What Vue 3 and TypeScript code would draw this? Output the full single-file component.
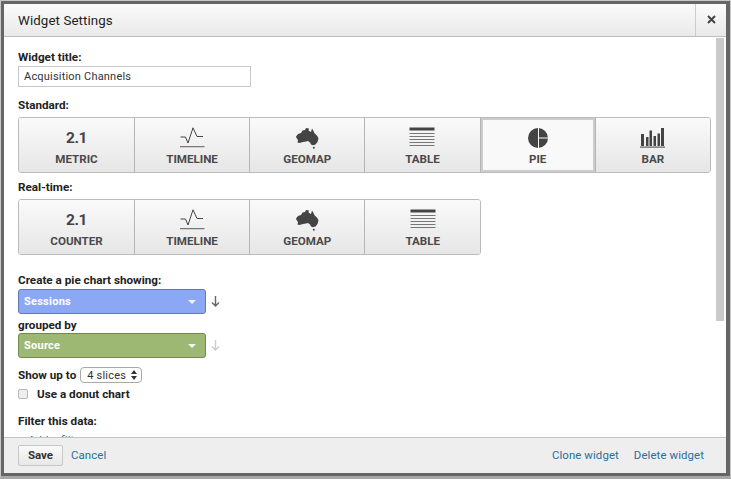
<script setup lang="ts">
interface Chart { label: string; icon: string; active?: boolean }
const standard: Chart[] = [
  { label: 'METRIC', icon: 'num' },
  { label: 'TIMELINE', icon: 'line' },
  { label: 'GEOMAP', icon: 'map' },
  { label: 'TABLE', icon: 'table' },
  { label: 'PIE', icon: 'pie', active: true },
  { label: 'BAR', icon: 'bar' },
]
const realtime: Chart[] = [
  { label: 'COUNTER', icon: 'num' },
  { label: 'TIMELINE', icon: 'line' },
  { label: 'GEOMAP', icon: 'map' },
  { label: 'TABLE', icon: 'table' },
]
const groups = [
  { title: 'Standard:', items: standard, cls: 'standard' },
  { title: 'Real-time:', items: realtime, cls: 'realtime' },
]
</script>

<template>
  <div class="frame">
    <div class="dialog">
      <header class="head">
        <h1 class="title">Widget Settings</h1>
        <button class="close" aria-label="Close">
          <svg width="9" height="9" viewBox="0 0 9 9"><path d="M1 1l7 7M8 1L1 8" stroke="#444" stroke-width="2" /></svg>
        </button>
      </header>
      <div class="main">
        <div class="content">
          <label class="lbl first">Widget title:</label>
          <input class="text" value="Acquisition Channels" />
          <template v-for="g in groups" :key="g.title">
            <div class="lbl" :class="'lbl-' + g.cls">{{ g.title }}</div>
            <div class="charts" :class="g.cls">
              <button v-for="c in g.items" :key="c.label" class="chart" :class="{ active: c.active }">
                <span class="ico">
                  <span v-if="c.icon === 'num'" class="num">2.1</span>
                  <svg v-else-if="c.icon === 'line'" width="26" height="21" viewBox="0 0 26 21">
                    <path d="M1.500 10H6.500L9 16 14 .8 18 9.500H24" fill="none" stroke="#444" stroke-width="1" />
                    <path d="M1 19.700H25.500" stroke="#777" stroke-width="1.200" />
                  </svg>
                  <svg v-else-if="c.icon === 'map'" width="24" height="22" viewBox="0 0 24 22">
                    <path d="M1 9.500 3 7l3-1 1.500-2.500L10 3l1-2 3 .5-.5 2 2.500 1.500L17 1.500l1.500 2.500.8 2 3 3 1.200 2.500-1 3.500-2 2.500-2.500.8-2-.8-1-2-2-1.500-2 .5-3 .5-3.500 1-2-.5.5-2.500L1.500 11z" fill="#444" />
                    <circle cx="18.800" cy="20.800" r="1" fill="#444" />
                  </svg>
                  <svg v-else-if="c.icon === 'table'" width="26" height="21" viewBox="0 0 26 21">
                    <rect x="0.500" y="0.500" width="25" height="3" fill="#444" />
                    <path d="M.5 6.500h25M.5 9.500h25M.5 12.500h25M.5 15.500h25M.5 18.500h25" stroke="#777" stroke-width="1.200" />
                  </svg>
                  <svg v-else-if="c.icon === 'pie'" width="20" height="20" viewBox="0 0 20 20">
                    <circle cx="10" cy="10" r="10" fill="#444" />
                    <path d="M10.500 0v20M10.500 10H20" stroke="#fafafa" stroke-width="1" />
                  </svg>
                  <svg v-else width="25" height="21" viewBox="0 0 25 21">
                    <path d="M1 7h3v12H1zM6 10h2.500v9H6zM9.500 3.500H12V19H9.500zM13.500 9H16v10h-2.500zM17.500 6.500H20V19h-2.500zM21 1h3v18h-3z" fill="#444" />
                    <path d="M0 20.200H25" stroke="#666" stroke-width="1.200" />
                  </svg>
                </span>
                <span class="name">{{ c.label }}</span>
              </button>
            </div>
          </template>

          <div class="lbl showing">Create a pie chart showing:</div>
          <div class="pick">
            <div class="dd blue"><span>Sessions</span><i class="caret"></i></div>
            <svg class="arrow" width="9" height="11" viewBox="0 0 9 11"><path d="M4.500 0v10M1 6.500l3.500 3.500L8 6.500" fill="none" stroke="#666" stroke-width="1.400" /></svg>
          </div>
          <div class="lbl grouped">grouped by</div>
          <div class="pick second">
            <div class="dd green"><span>Source</span><i class="caret"></i></div>
            <svg class="arrow" width="9" height="11" viewBox="0 0 9 11"><path d="M4.500 0v10M1 6.500l3.500 3.500L8 6.500" fill="none" stroke="#ccc" stroke-width="1.400" /></svg>
          </div>
          <div class="show">
            <span class="lbl-inline">Show up to</span>
            <div class="slices">
              <span>4 slices</span>
              <svg width="6" height="10" viewBox="0 0 6 10"><path d="M3 0l3 4H0zM3 10L0 6h6z" fill="#333" /></svg>
            </div>
          </div>
          <div class="donut">
            <span class="check"></span>
            <span class="lbl-inline">Use a donut chart</span>
          </div>
          <div class="lbl filter">Filter this data:</div>
          <a class="link add">Add a filter</a>
        </div>
        <div class="scroll"><div class="thumb"></div></div>
      </div>
      <footer class="foot">
        <button class="save">Save</button>
        <a class="link cancel">Cancel</a>
        <div class="spacer"></div>
        <a class="link">Clone widget</a>
        <a class="link delete">Delete widget</a>
      </footer>
    </div>
  </div>
</template>

<style>
html, body { margin: 0; background: #a8a8a8; }
</style>

<style scoped>
.frame {
  width: 731px;
  height: 479px;
  box-sizing: border-box;
  padding: 3px 4px 3px 3px;
  background: #666;
  border: 1px solid #c8c8c8;
  border-bottom: 3px solid #a8a8a8;
  font-family: Roboto, "Liberation Sans", sans-serif;
  color: #222;
}
.dialog {
  height: 100%;
  background: #fff;
  display: flex;
  flex-direction: column;
  overflow: hidden;
}
.head {
  height: 32px;
  flex: none;
  display: flex;
  align-items: stretch;
  justify-content: space-between;
  background: linear-gradient(#fbfbfb, #e9e9e9);
  border-bottom: 1px solid #bdbdbd;
}
.title {
  margin: 1px 0 0 14px;
  font-size: 13.300px;
  font-weight: 400;
  line-height: 32px;
  letter-spacing: 0.1px;
  color: #222;
}
.close {
  width: 31px;
  padding: 0 0 1px;
  background: none;
  border: 0;
  border-left: 1px solid #ccc;
  display: flex;
  align-items: center;
  justify-content: center;
}
.main {
  flex: 1;
  min-height: 0;
  display: flex;
  justify-content: space-between;
  overflow: hidden;
}
.content {
  flex: 1;
  padding-left: 14px;
  min-width: 0;
}
.lbl, .lbl-inline {
  font-size: 11.700px;
  font-weight: 700;
  line-height: 14px;
  color: #222;
  display: block;
}
.lbl-inline { display: inline; }
.first { margin-top: 13px; }
.text {
  display: block;
  box-sizing: border-box;
  width: 233px;
  height: 21px;
  margin-top: 2px;
  padding: 0 5px;
  border: 1px solid #c8c8c8;
  font: 400 11px Roboto, sans-serif;
  letter-spacing: 0.2px;
  color: #333;
  outline: none;
}
.lbl-standard { margin-top: 11px; }
.lbl-realtime { margin-top: 7px; }
.charts {
  display: flex;
  margin-top: 5px;
  height: 56px;
  box-sizing: border-box;
  border: 1px solid #bbb;
  border-radius: 3px;
  overflow: hidden;
}
.standard { width: 693px; }
.realtime { width: 463px; }
.chart {
  width: 115.200px;
  flex: none;
  padding: 0;
  border: 0;
  border-right: 1px solid #b5b5b5;
  background: linear-gradient(#fafafa, #e6e6e6);
  display: flex;
  flex-direction: column;
  align-items: center;
  font-family: inherit;
}
.chart:first-child { width: 116px; }
.chart:last-child { border-right: 0; flex: 1; }
.chart.active {
  background: #f9f9f9;
  box-shadow: inset 0 0 0 2px #cccccc;
}
.ico {
  height: 23px;
  margin-top: 8px;
  display: flex;
  align-items: center;
  justify-content: center;
}
.num {
  font-size: 15.500px;
  font-weight: 700;
  color: #444;
  letter-spacing: -0.4px;
}
.name {
  margin-top: 3px;
  font-size: 11.600px;
  font-weight: 700;
  line-height: 14px;
  color: #4a4a4a;
}
.showing { margin-top: 18px; }
.pick {
  display: flex;
  align-items: center;
  gap: 5px;
  margin-top: 2px;
}
.second { margin-top: 1px; }
.dd {
  width: 188px;
  height: 25px;
  box-sizing: border-box;
  padding: 0 9px 0 5px;
  border-radius: 3px;
  display: flex;
  align-items: center;
  justify-content: space-between;
  color: #fff;
  font-size: 11px;
  font-weight: 700;
  letter-spacing: 0.25px;
}
.blue { background: #8ca8f5; border: 1px solid #5f78b8; }
.green { background: #9db872; border: 1px solid #6f8a4c; }
.caret {
  width: 0;
  height: 0;
  border-left: 4px solid transparent;
  border-right: 4px solid transparent;
  border-top: 4px solid #f4f4f4;
}
.grouped { margin-top: 4px; }
.show {
  display: flex;
  align-items: center;
  gap: 4px;
  margin-top: 9px;
}
.slices {
  height: 16px;
  width: 62px;
  box-sizing: border-box;
  padding: 0 4px 0 6px;
  border: 1px solid #a8a8a8;
  border-radius: 4px;
  display: flex;
  align-items: center;
  justify-content: space-between;
  font-size: 11px;
  letter-spacing: 0.2px;
  color: #333;
}
.donut {
  display: flex;
  align-items: center;
  gap: 9px;
  margin-top: 2px;
  height: 18px;
}
.check {
  width: 8px;
  height: 8px;
  border: 1px solid #b8b8b8;
  border-radius: 2px;
  background: #eeeeee;
}
.filter { margin-top: 11px; }
.add {
  display: block;
  margin: 5px 0 0 10px;
}
.link {
  font-size: 11.400px;
  color: #2a6f9e;
  letter-spacing: 0.1px;
  white-space: nowrap;
}
.scroll {
  width: 8px;
  flex: none;
  margin-right: 2px;
}
.thumb {
  width: 8px;
  height: 283px;
  margin-top: 1px;
  background: #cacaca;
}
.foot {
  height: 36px;
  flex: none;
  box-sizing: border-box;
  display: flex;
  align-items: center;
  padding: 0 22px 1px 14px;
  background: #eeeeee;
  border-top: 1px solid #c4c4c4;
}
.save {
  width: 45px;
  height: 21px;
  padding: 0;
  border: 1px solid #c8c8c8;
  border-radius: 2px;
  background: linear-gradient(#fafafa, #e8e8e8);
  font: 700 11.500px Roboto, sans-serif;
  color: #333;
}
.cancel { margin-left: 8px; }
.spacer { flex: 1; }
.delete { margin-left: 15px; }
</style>
